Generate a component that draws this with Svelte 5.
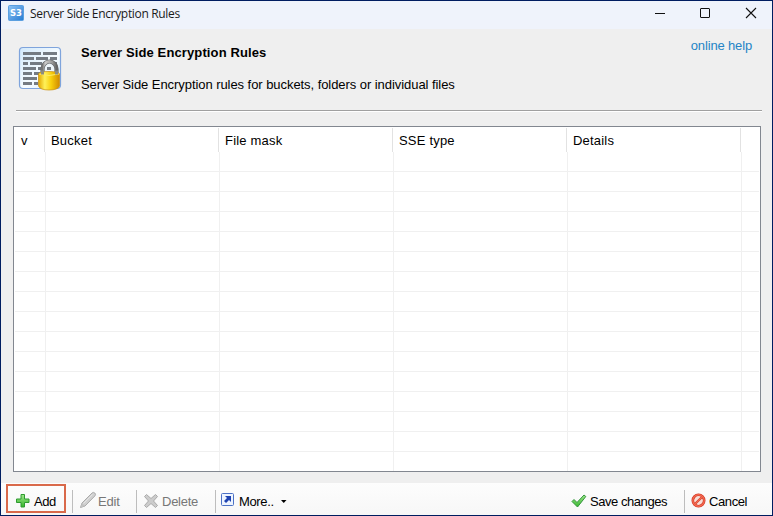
<script>
  const columns = [
    { name: 'v', width: 31 },
    { name: 'Bucket', width: 174 },
    { name: 'File mask', width: 174 },
    { name: 'SSE type', width: 174 },
    { name: 'Details', width: 174 }
  ];
  const rows = Array.from({ length: 16 }, (_, i) => i);
</script>

<div class="window">
  <header class="titlebar">
    <svg class="app-icon" width="16" height="16" viewBox="0 0 16 16">
      <defs>
        <linearGradient id="s3" x1="0" y1="0" x2="1" y2="1">
          <stop offset="0" stop-color="#8fc4f5" />
          <stop offset="1" stop-color="#267bd2" />
        </linearGradient>
      </defs>
      <rect x=".5" y=".5" width="15" height="15" rx="1" fill="url(#s3)" stroke="#5a9fe0" />
      <text x="8" y="11" text-anchor="middle" textLength="12" lengthAdjust="spacingAndGlyphs" font-size="9" font-weight="bold" font-family="DejaVu Sans, sans-serif" fill="#fff">S3</text>
    </svg>
    <span class="title">Server Side Encryption Rules</span>
    <svg class="controls" width="104" height="12" viewBox="0 0 104 12" fill="none" stroke="#111">
      <path d="M0 6.5H10" />
      <rect x="45.5" y="1.5" width="9" height="9" rx=".5" />
      <path d="M91 1L101 11M101 1L91 11" stroke-width="1.1" />
    </svg>
  </header>

  <section class="intro">
    <svg class="doc-icon" width="44" height="46" viewBox="0 0 44 46">
      <defs>
        <linearGradient id="paper" x1="0" y1="0" x2="1" y2="1">
          <stop offset="0" stop-color="#d2e9fb" />
          <stop offset=".55" stop-color="#f5fbff" />
          <stop offset="1" stop-color="#d5ebfc" />
        </linearGradient>
        <linearGradient id="gold">
          <stop offset="0" stop-color="#e5a800" />
          <stop offset=".3" stop-color="#fff15a" />
          <stop offset=".6" stop-color="#f8cf0c" />
          <stop offset="1" stop-color="#d18b00" />
        </linearGradient>
        <linearGradient id="steel">
          <stop offset="0" stop-color="#777" />
          <stop offset=".2" stop-color="#ccc" />
          <stop offset=".7" stop-color="#999" />
          <stop offset="1" stop-color="#666" />
        </linearGradient>
      </defs>
      <rect x="1.500" y="1.500" width="41" height="41" rx="3.5" fill="url(#paper)" stroke="#7fa4dc" stroke-width="1.2" />
      <path fill="#747b83" d="M5 6h18v3H5zM25 6h14v3H25zM5 11h11v3H5zM18 11h12v3H18zM32 11h7v3h-7zM5 16h5v3H5zM12 16h12v3H12zM26 16h13v3H26zM5 21h13v3H5zM20 21h5v3h-5zM5 26h9v3H5zM16 26h6v3h-6zM5 31h14v3H5zM5 36h9v3H5zM16 36h4v3h-4z" />
      <path d="M24.500 29V23a7 7.500 0 0 1 14 0V29" fill="#eef6fb" stroke="#62666a" stroke-width="4.200" />
      <path d="M29 21h4v3h-4z" fill="#747b83" />
      <path d="M24.500 29V23a7 7.500 0 0 1 14 0V29" fill="none" stroke="url(#steel)" stroke-width="2.800" />
      <path d="M20.500 28Q21 25.500 31 25.500T41.500 28V40Q40 44 31 44T20.500 40Z" fill="url(#gold)" stroke="#c88d09" stroke-width=".7" />
      <path d="M21 28Q31 31 41 28" fill="none" stroke="#ffed66" />
      <path d="M24.500 24.500v4M38.500 24.500v4" stroke="#8c8c80" stroke-width="3" />
    </svg>
    <div class="copy">
      <h1>Server Side Encryption Rules</h1>
      <p>Server Side Encryption rules for buckets, folders or individual files</p>
    </div>
    <a href="#help">online help</a>
  </section>
  <div class="rule"></div>

  <main class="list">
    <div class="head">
      {#each columns as c}
        <div class="th" style:width="{c.width}px">{c.name}</div>
      {/each}
    </div>
    <div class="body">
      {#each rows as r (r)}
        <div class="row">
          {#each columns as c}
            <div class="td" style:width="{c.width}px"></div>
          {/each}
        </div>
      {/each}
    </div>
  </main>

  <footer class="toolbar">
    <div class="btn add">
      <svg width="16" height="16" viewBox="0 0 16 16">
        <defs><linearGradient id="green" x1="0" y1="0" x2="0" y2="1"><stop stop-color="#a0e88c" /><stop offset="1" stop-color="#36b52c" /></linearGradient></defs>
        <path d="M6 1.500h3.500V6H14v3.500H9.500V14H6V9.500H1.500V6H6Z" fill="url(#green)" stroke="#2e9a30" stroke-linejoin="round" />
      </svg>
      <span class="l-add">Add</span>
    </div>
    <i class="sep"></i>
    <div class="btn edit off">
      <svg width="18" height="18" viewBox="0 0 18 18">
        <path d="M1.500 16.500L3 12L13 2Q14.500 .8 15.800 2T16 4.800L6 15Z" fill="#d0d0d0" stroke="#aaa" stroke-linejoin="round" />
        <path d="M4.500 12.500L13.500 3.500" stroke="#e4e4e4" />
        <path d="M1.500 16.500L3 12L6 15Z" fill="#c2c2c2" />
      </svg>
      <span class="l-edit">Edit</span>
    </div>
    <i class="sep"></i>
    <div class="btn delete off">
      <svg width="16" height="16" viewBox="0 0 16 16">
        <path d="M3.500 1.500L8 5.500L12.500 1.500L14.500 3.500L10.500 8L14.500 12.500L12.500 14.500L8 10.500L3.500 14.500L1.500 12.500L5.500 8L1.500 3.500Z" fill="#ccc" stroke="#aaa" stroke-linejoin="round" />
      </svg>
      <span class="l-delete">Delete</span>
    </div>
    <i class="sep"></i>
    <div class="btn more">
      <svg width="14" height="14" viewBox="0 0 14 14">
        <rect x=".5" y=".5" width="12" height="12" rx="1" fill="#edf4ff" stroke="#4c71c5" />
        <path d="M4 3h6v6L8 7L5 10L3 8L6 5Z" fill="#1e42b1" />
      </svg>
      <span class="l-more">More..</span>
      <svg class="caret" width="6" height="4" viewBox="0 0 6 4"><path d="M0 0H5.500L2.750 3Z" fill="#000" /></svg>
    </div>
    <div class="btn save">
      <svg width="16" height="16" viewBox="0 0 16 16">
        <path d="M1 8.500L3 6.500L6 9.500L13 2L14.800 3.500L6.500 14Z" fill="url(#green)" stroke="#33943d" stroke-linejoin="round" />
      </svg>
      <span class="l-save">Save changes</span>
    </div>
    <i class="sep"></i>
    <div class="btn cancel">
      <svg width="16" height="16" viewBox="0 0 16 16">
        <circle cx="7.500" cy="7.500" r="5.700" fill="#f8ded7" stroke="#cf3322" stroke-width="2.600" />
        <path d="M3.700 11.300L11.300 3.700" stroke="#cf3322" stroke-width="2.200" />
        <circle cx="7.500" cy="7.500" r="5.700" fill="none" stroke="#f46a50" stroke-width="1.400" />
        <path d="M4 11L11 4" stroke="#f46a50" stroke-width="1.200" />
      </svg>
      <span class="l-cancel">Cancel</span>
    </div>
  </footer>
</div>

<style>
  .window {
    box-sizing: border-box;
    width: 773px;
    height: 516px;
    border: 1px solid #001d60;
    background: #efefef;
    display: flex;
    flex-direction: column;
    overflow: hidden;
    font: 13px/16px "Liberation Sans", Arial, sans-serif;
    color: #000;
    white-space: nowrap;
  }
  .titlebar {
    height: 28px;
    flex: none;
    display: flex;
    background: #eff3fb;
  }
  .app-icon { margin: 4px 0 0 7px; }
  .title {
    font: 12px/16px "Open Sans", "Noto Sans", sans-serif;
    margin: 5px 0 0 6px;
    letter-spacing: -.33px;
    color: #1a1a1a;
  }
  .controls { margin: 6px 13px 0 auto; }
  .intro { height: 81px; flex: none; display: flex; }
  .doc-icon { margin: 17px 0 0 17px; }
  .copy { margin: 16px 0 0 19px; }
  h1 { font: bold 13px/16px "Liberation Sans", Arial, sans-serif; margin: 0; letter-spacing: .12px; }
  p { margin: 16px 0 0; letter-spacing: -.06px; }
  a { margin: 9px 20px 0 auto; color: #2484c6; text-decoration: none; letter-spacing: -.15px; }
  .rule {
    flex: none;
    height: 1px;
    margin: 0 10px 0 15px;
    background: #a0a0a0;
    border-bottom: 1px solid #fff;
  }
  .list {
    box-sizing: border-box;
    flex: none;
    width: 748px;
    height: 346px;
    margin: 14px 0 0 12px;
    border: 1px solid #828790;
    background: #fff;
    overflow: hidden;
    padding: 1px 1px 0 0;
  }
  .head { display: flex; height: 24px; }
  .th {
    box-sizing: border-box;
    border-right: 1px solid #e2e2e2;
    padding: 5px 0 0 6px;
    letter-spacing: .2px;
  }
  .th:first-child { padding-left: 7px; }
  .body { margin-left: 1px; height: 319px; overflow: hidden; }
  .row {
    box-sizing: border-box;
    height: 20px;
    display: flex;
    border-bottom: 1px solid #f0f0f0;
  }
  .td { box-sizing: border-box; border-right: 1px solid #f0f0f0; }
  .toolbar {
    flex: none;
    height: 32px;
    margin-top: 11px;
    display: flex;
    background: linear-gradient(#fdfdfd, #f7f7f7);
  }
  .btn { display: flex; box-sizing: border-box; height: 30px; }
  .btn span { margin-top: 11px; }
  .btn svg { margin-top: 10px; flex: none; }
  .sep { width: 1px; height: 23px; margin-top: 7px; background: #bdbdbd; flex: none; }
  .off { color: #777; }
  .add {
    margin: 1px 6px 0 5px;
    width: 60px;
    height: 29px;
    border: 2px solid #d9694a;
    padding-left: 7px;
  }
  .add svg { margin-top: 7px; }
  .add span { margin: 8px 0 0 3px; letter-spacing: -.5px; }
  .edit { width: 63px; padding-left: 6px; }
  .edit svg { margin-top: 8px; }
  .edit span { margin-left: 1px; letter-spacing: -.2px; }
  .delete { width: 78px; padding-left: 6px; }
  .delete span { margin-left: 3px; letter-spacing: -.25px; }
  .more { padding-left: 5px; }
  .more span { margin-left: 4px; letter-spacing: -.35px; }
  .more .caret { margin: 17px 0 0 7px; }
  .save { margin-left: auto; width: 113px; }
  .save span { margin-left: 3px; letter-spacing: -.45px; }
  .cancel { width: 87px; padding-left: 7px; }
  .cancel svg { margin-left: -1px; }
  .cancel span { margin-left: 2px; letter-spacing: -.4px; }
</style>
